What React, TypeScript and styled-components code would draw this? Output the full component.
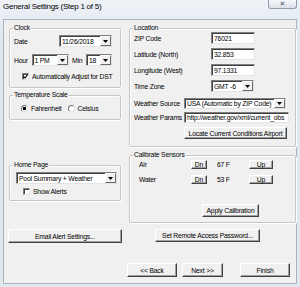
import React from 'react';
import styled, { createGlobalStyle } from 'styled-components';

const GlobalStyle = createGlobalStyle`
	html, body {
		margin: 0;
		padding: 0;
		background: #ffffff;
	}
	body {
		font-family: 'Liberation Sans', Arial, sans-serif;
		font-size: 6.8px;
		letter-spacing: -0.2px;
		color: #000;
	}
`;

const DropArrow = () => (
	<svg width="5" height="3" viewBox="0 0 5 3">
		<polygon points="0,0 5,0 2.5,3" fill="#000" />
	</svg>
);

const CheckMark = () => (
	<svg width="5" height="5" viewBox="0 0 5 5">
		<polyline points="0.5,2.5 2,4 4.5,0.8" fill="none" stroke="#000" strokeWidth="1.1" />
	</svg>
);

type ComboProps = { value: string; width: number; height?: number };

const Combo = ({ value, width, height = 12 }: ComboProps) => (
	<ComboBox $w={width} $h={height}>
		<ComboText>{value}</ComboText>
		<DropButton>
			<DropArrow />
		</DropButton>
	</ComboBox>
);

type CheckProps = { label: string; checked?: boolean };

const Check = ({ label, checked }: CheckProps) => (
	<CheckRow>
		<CheckBox>{checked && <CheckMark />}</CheckBox>
		<span>{label}</span>
	</CheckRow>
);

const App = () => {
	return (
		<>
			<GlobalStyle />
			<Window>
				<TitleBar>
					<Title>General Settings (Step 1 of 5)</Title>
					<CloseButton>✕</CloseButton>
				</TitleBar>
				<Client>
					<Columns>
						<Column>
							<Group>
								<Legend>Clock</Legend>
								<GroupBody $pad="3px 5px 7px 1px">
									<FieldRow $gap={8}>
										<span>Date</span>
										<Combo value="11/26/2018" width={53} />
									</FieldRow>
									<FieldRow $gap={7}>
										<span>Hour</span>
										<Combo value="1 PM" width={37} />
										<span>Min</span>
										<Combo value="18" width={26} />
									</FieldRow>
									<Indent $left={8} $top={7}>
										<Check label="Automatically Adjust for DST" checked />
									</Indent>
								</GroupBody>
							</Group>
							<Group $top={3}>
								<Legend>Temperature Scale</Legend>
								<GroupBody $pad="6px 4px 7px 8px">
									<RadioRow>
										<RadioItem>
											<Radio $on />
											<span>Fahrenheit</span>
										</RadioItem>
										<RadioItem>
											<Radio />
											<span>Celsius</span>
										</RadioItem>
									</RadioRow>
								</GroupBody>
							</Group>
							<Group $top={41}>
								<Legend>Home Page</Legend>
								<GroupBody $pad="3px 2px 5px 3px">
									<Combo value="Pool Summary + Weather" width={101} />
									<Indent $left={7} $top={4}>
										<Check label="Show Alerts" />
									</Indent>
								</GroupBody>
							</Group>
						</Column>
						<Column>
							<Group>
								<Legend>Location</Legend>
								<GroupBody $pad="0 3px 7px 1px">
									<LocationRow $label={77} $top={0}>
										<span>ZIP Code</span>
										<TextBox $w={44}>76021</TextBox>
									</LocationRow>
									<LocationRow $label={77}>
										<span>Latitude (North)</span>
										<TextBox $w={44}>32.853</TextBox>
									</LocationRow>
									<LocationRow $label={77}>
										<span>Longitude (West)</span>
										<TextBox $w={44}>97.1331</TextBox>
									</LocationRow>
									<LocationRow $label={77}>
										<span>Time Zone</span>
										<Combo value="GMT -6" width={43} />
									</LocationRow>
									<LocationRow $label={50} $top={6}>
										<span>Weather Source</span>
										<Combo value="USA (Automatic by ZIP Code)" width={102} height={11} />
									</LocationRow>
									<LocationRow $label={50} $top={3}>
										<span>Weather Params</span>
										<TextBox $w={105} $h={11}>
											http://weather.gov/xml/current_obs
										</TextBox>
									</LocationRow>
									<LocationRow $label={50} $top={4}>
										<span />
										<Button $w={103} $h={12}>
											Locate Current Conditions Airport
										</Button>
									</LocationRow>
								</GroupBody>
							</Group>
							<Group $top={4}>
								<Legend>Calibrate Sensors</Legend>
								<GroupBody $pad="1px 3px 5px 6px">
									<SensorRow>
										<span>Air</span>
										<Button $w={16} $h={9}>Dn</Button>
										<span>67 F</span>
										<Button $w={24} $h={9}>Up</Button>
									</SensorRow>
									<SensorRow $top={6}>
										<span>Water</span>
										<Button $w={16} $h={9}>Dn</Button>
										<span>53 F</span>
										<Button $w={24} $h={9}>Up</Button>
									</SensorRow>
									<Indent $left={63} $top={20}>
										<Button $w={57} $h={13}>Apply Calibration</Button>
									</Indent>
								</GroupBody>
							</Group>
						</Column>
					</Columns>
					<Columns $top={6}>
						<Button $w={114} $h={14} $shift={-1}>
							Email Alert Settings...
						</Button>
						<Indent $left={26}>
							<Button $w={105} $h={13}>Set Remote Access Password...</Button>
						</Indent>
					</Columns>
					<NavRow>
						<Button $w={50} $h={14}>&lt;&lt; Back</Button>
						<Button $w={41} $h={14}>Next &gt;&gt;</Button>
						<NavSpacer />
						<Button $w={50} $h={14}>Finish</Button>
					</NavRow>
				</Client>
			</Window>
		</>
	);
};

export default App;

const Window = styled.div`
	width: 300px;
	height: 287px;
	box-sizing: border-box;
	display: flex;
	flex-direction: column;
	padding: 0 3px 3px 3px;
	background: linear-gradient(#eef2f7, #dfe7ef 40px, #dfe7ef);
`;

const TitleBar = styled.div`
	height: 19px;
	display: flex;
	justify-content: space-between;
	align-items: flex-start;
`;

const Title = styled.span`
	font-size: 8px;
	letter-spacing: -0.25px;
	padding-top: 2px;
	line-height: 10px;
`;

const CloseButton = styled.div`
	width: 29px;
	height: 9px;
	box-sizing: border-box;
	border: 1px solid #8e9cac;
	border-top: none;
	border-radius: 0 0 3px 3px;
	background: linear-gradient(#f6f8fa, #dbe2ea);
	color: #4a5563;
	font-family: 'DejaVu Sans', sans-serif;
	font-size: 7px;
	font-weight: bold;
	letter-spacing: 0;
	line-height: 8px;
	text-align: center;
`;

const Client = styled.div`
	flex: 1;
	display: flex;
	flex-direction: column;
	padding: 4px 3px 6px 5px;
	background: #f0f0f0;
	border: 1px solid #a9b4c0;
`;

const Columns = styled.div<{ $top?: number }>`
	display: grid;
	grid-template-columns: 112px 1fr;
	column-gap: 8px;
	align-items: start;
	margin-top: ${(p) => p.$top ?? 0}px;
`;

const Column = styled.div`
	display: flex;
	flex-direction: column;
`;

const Group = styled.fieldset<{ $top?: number }>`
	margin: ${(p) => p.$top ?? 0}px 0 0 0;
	padding: 0 3px;
	min-width: 0;
	border: 1px solid #c6c6c6;
	border-radius: 2px;
	box-shadow: inset 1px 1px 0 #fff, 1px 1px 0 #fff;
`;

const Legend = styled.legend`
	padding: 0 1px;
	line-height: 8px;
`;

const GroupBody = styled.div<{ $pad: string }>`
	display: flex;
	flex-direction: column;
	align-items: flex-start;
	padding: ${(p) => p.$pad};
`;

const FieldRow = styled.div<{ $gap: number }>`
	display: flex;
	align-items: center;
	justify-content: space-between;
	align-self: stretch;
	margin-top: ${(p) => p.$gap}px;
	&:first-child {
		margin-top: 0;
	}
`;

const Indent = styled.div<{ $left?: number; $top?: number }>`
	margin-left: ${(p) => p.$left ?? 0}px;
	margin-top: ${(p) => p.$top ?? 0}px;
`;

const ComboBox = styled.div<{ $w: number; $h: number }>`
	width: ${(p) => p.$w}px;
	height: ${(p) => p.$h}px;
	box-sizing: border-box;
	display: flex;
	align-items: stretch;
	background: #fff;
	border: 1px solid;
	border-color: #7f7f7f #e3e3e3 #e3e3e3 #7f7f7f;
	box-shadow: inset 1px 1px 0 #404040;
`;

const ComboText = styled.span`
	flex: 1;
	overflow: hidden;
	white-space: nowrap;
	padding: 0 2px;
	display: flex;
	align-items: center;
`;

const DropButton = styled.span`
	width: 9px;
	display: flex;
	align-items: center;
	justify-content: center;
	background: #f0f0f0;
	border: 1px solid;
	border-color: #fff #696969 #696969 #fff;
`;

const TextBox = styled.div<{ $w: number; $h?: number }>`
	width: ${(p) => p.$w}px;
	height: ${(p) => p.$h ?? 12}px;
	box-sizing: border-box;
	display: flex;
	align-items: center;
	padding: 0 2px;
	overflow: hidden;
	white-space: nowrap;
	background: #fff;
	border: 1px solid;
	border-color: #7f7f7f #e3e3e3 #e3e3e3 #7f7f7f;
	box-shadow: inset 1px 1px 0 #404040;
`;

const CheckRow = styled.div`
	display: flex;
	align-items: center;
	gap: 3px;
	white-space: nowrap;
`;

const CheckBox = styled.span`
	width: 7px;
	height: 7px;
	box-sizing: border-box;
	display: flex;
	align-items: center;
	justify-content: center;
	background: #fff;
	border: 1px solid;
	border-color: #7f7f7f #e3e3e3 #e3e3e3 #7f7f7f;
	box-shadow: inset 1px 1px 0 #404040;
`;

const RadioRow = styled.div`
	display: flex;
	gap: 6px;
	white-space: nowrap;
`;

const RadioItem = styled.div`
	display: flex;
	align-items: center;
	gap: 3px;
`;

const Radio = styled.span<{ $on?: boolean }>`
	width: 7px;
	height: 7px;
	box-sizing: border-box;
	border-radius: 50%;
	background: ${(p) => (p.$on ? 'radial-gradient(#000 0 1.6px, #fff 2px)' : '#fff')};
	border: 1px solid;
	border-color: #707070 #e3e3e3 #e3e3e3 #707070;
`;

const LocationRow = styled.div<{ $label: number; $top?: number }>`
	display: grid;
	grid-template-columns: ${(p) => p.$label}px auto;
	align-items: center;
	white-space: nowrap;
	margin-top: ${(p) => p.$top ?? 4}px;
`;

const SensorRow = styled.div<{ $top?: number }>`
	display: grid;
	grid-template-columns: 52px 16px 42px 24px;
	align-items: center;
	margin-top: ${(p) => p.$top ?? 0}px;
	& > span:nth-child(3) {
		padding-left: 10px;
	}
`;

const Button = styled.div<{ $w: number; $h: number; $shift?: number }>`
	width: ${(p) => p.$w}px;
	height: ${(p) => p.$h}px;
	box-sizing: border-box;
	margin-left: ${(p) => p.$shift ?? 0}px;
	display: flex;
	align-items: center;
	justify-content: center;
	white-space: nowrap;
	background: #f0f0f0;
	border: 1px solid;
	border-color: #fff #404040 #404040 #fff;
	box-shadow: inset -1px -1px 0 #a0a0a0;
`;

const NavRow = styled.div`
	display: flex;
	justify-content: flex-end;
	gap: 5px;
	margin-top: auto;
	padding-right: 3px;
`;

const NavSpacer = styled.span`
	width: 7px;
`;
